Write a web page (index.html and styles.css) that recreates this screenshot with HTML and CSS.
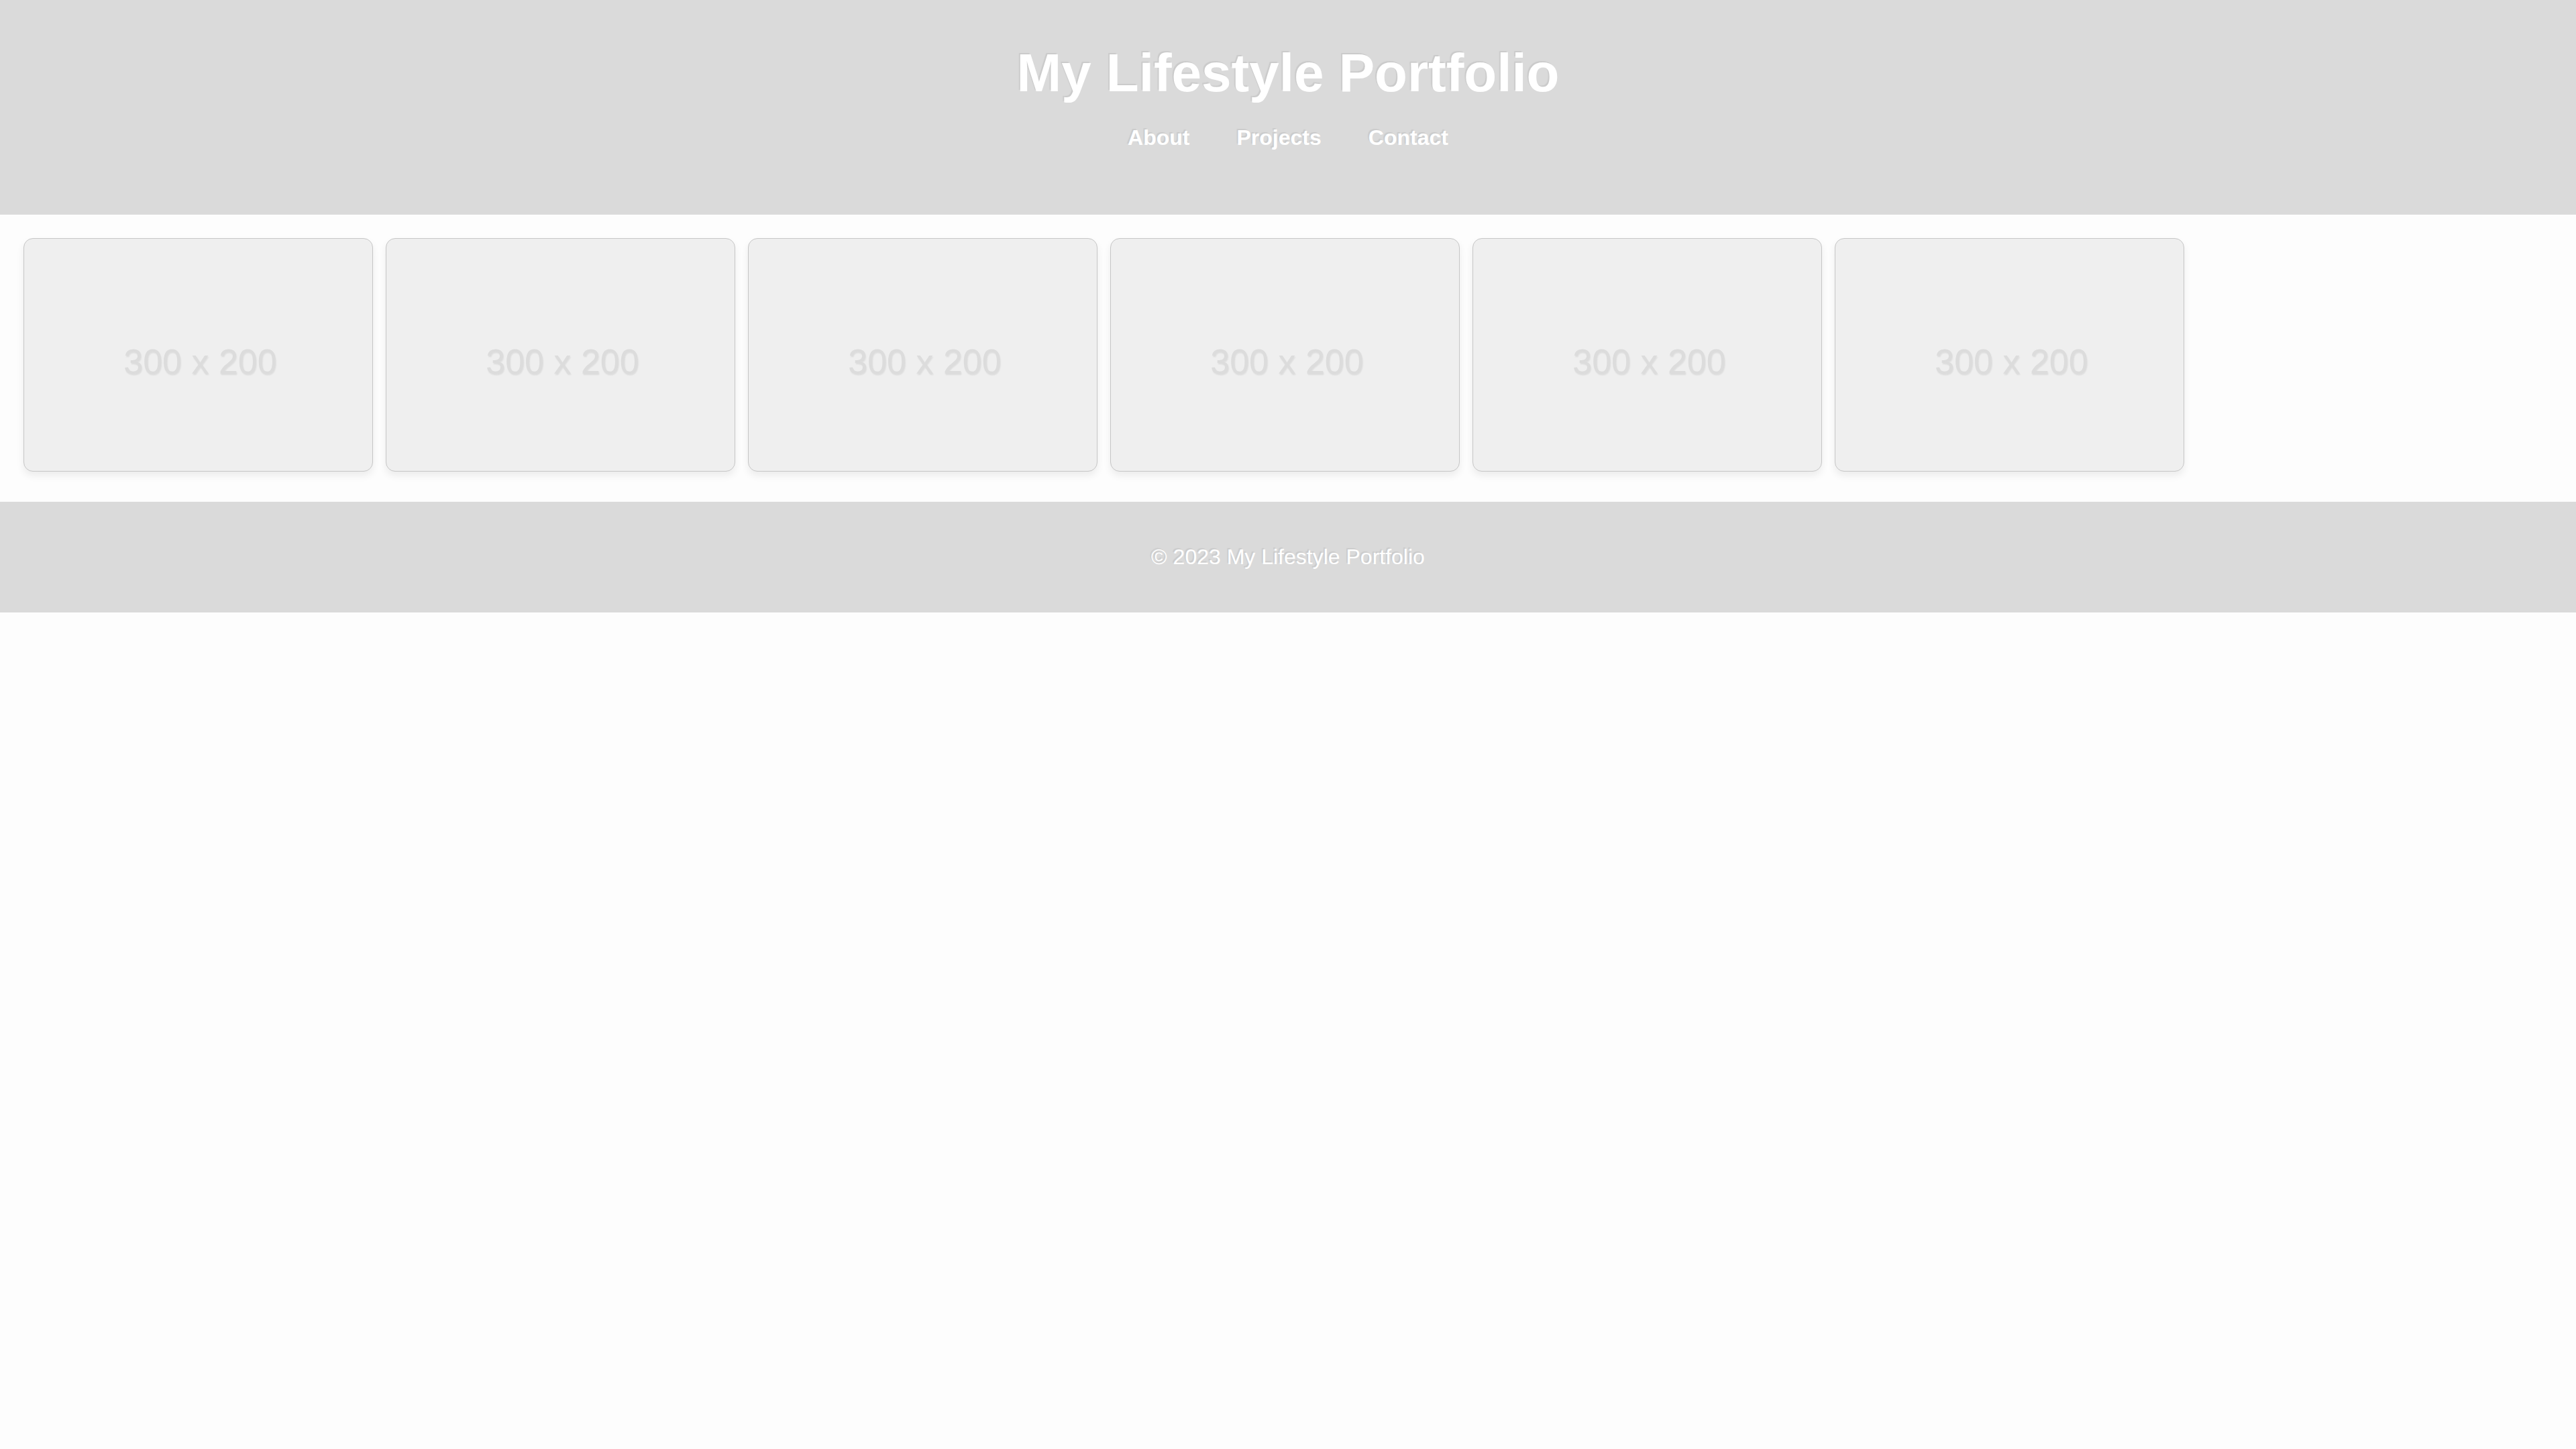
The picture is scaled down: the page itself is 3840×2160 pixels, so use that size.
FILE: index.html
```html
<!DOCTYPE html>
<html lang="en">
<head>
<meta charset="utf-8">
<title>My Lifestyle Portfolio</title>
<link rel="stylesheet" href="styles.css">
</head>
<body>
<header class="site-header">
  <h1 class="site-title">My Lifestyle Portfolio</h1>
  <nav class="site-nav">
    <a href="#about">About</a>
    <a href="#projects">Projects</a>
    <a href="#contact">Contact</a>
  </nav>
</header>
<main class="gallery">
  <div class="card"><span class="ph">300 x 200</span></div>
  <div class="card"><span class="ph">300 x 200</span></div>
  <div class="card"><span class="ph">300 x 200</span></div>
  <div class="card"><span class="ph">300 x 200</span></div>
  <div class="card"><span class="ph">300 x 200</span></div>
  <div class="card"><span class="ph">300 x 200</span></div>
</main>
<footer class="site-footer">
  <p class="copy">© 2023 My Lifestyle Portfolio</p>
</footer>
</body>
</html>
```

FILE: styles.css
```css
html, body {
  margin: 0;
  padding: 0;
}

body {
  background: #fdfdfd;
  font-family: "Liberation Sans", Arial, sans-serif;
}

.site-header {
  background: #dadada;
  padding: 63px 0 96px;
  text-align: center;
  color: #ffffff;
}

.site-title {
  margin: 0 0 32px;
  font-size: 80px;
  font-weight: bold;
  line-height: 92px;
  text-shadow: -2px -2px 1px rgba(0, 0, 0, 0.07);
}

.site-nav {
  display: flex;
  justify-content: center;
  gap: 70px;
}

.site-nav a {
  color: #ffffff;
  text-decoration: none;
  font-size: 32px;
  font-weight: bold;
  line-height: 37px;
  text-shadow: -2px -2px 1px rgba(0, 0, 0, 0.07);
}

.gallery {
  display: flex;
  gap: 19px;
  padding: 35px 34px 45px 35px;
}

.card {
  box-sizing: border-box;
  width: 521px;
  height: 348px;
  flex: none;
  border: 1px solid #c6c6c6;
  border-radius: 14px;
  background: #efefef;
  box-shadow: 0 6px 12px rgba(0, 0, 0, 0.07);
  display: flex;
  align-items: center;
  justify-content: center;
}

.ph {
  margin: 20px 0 0 6px;
  font-size: 52px;
  color: #dcdcdc;
  text-shadow: 1px 2px 2px rgba(0, 0, 0, 0.08);
}

.site-footer {
  background: #dadada;
  padding: 64px 0;
  text-align: center;
}

.copy {
  margin: 0;
  color: #ffffff;
  font-size: 32px;
  line-height: 37px;
  text-shadow: -2px -2px 1px rgba(0, 0, 0, 0.07);
}
```
